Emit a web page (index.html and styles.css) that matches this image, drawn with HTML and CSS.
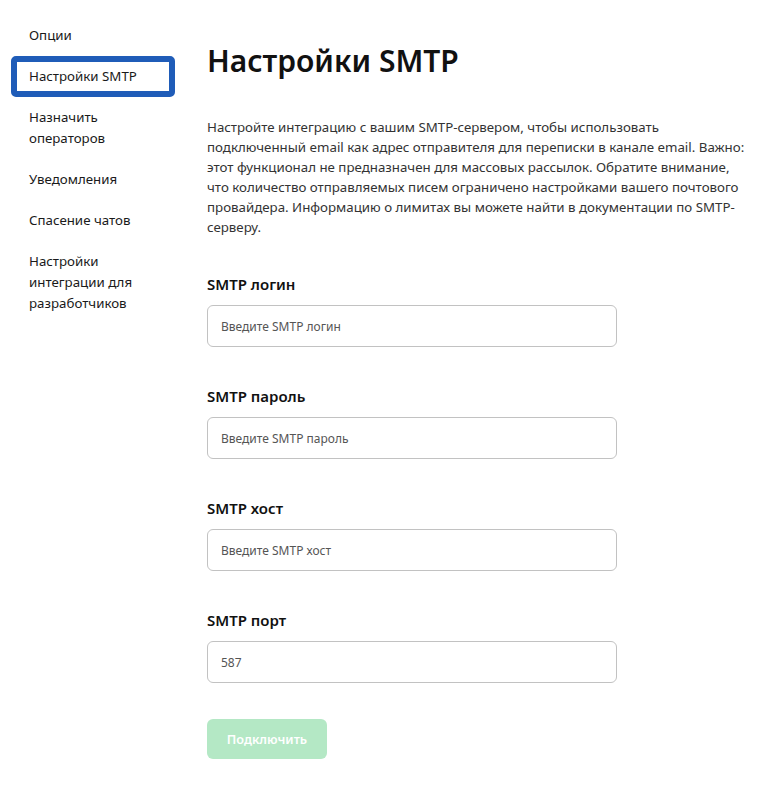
FILE: index.html
```html
<!DOCTYPE html>
<html lang="ru">
<head>
<meta charset="utf-8">
<title>Настройки SMTP</title>
<link rel="stylesheet" href="styles.css">
</head>
<body>
<div class="layout">
  <nav class="sidebar">
    <a class="nav-item">Опции</a>
    <a class="nav-item active">Настройки SMTP</a>
    <a class="nav-item">Назначить операторов</a>
    <a class="nav-item">Уведомления</a>
    <a class="nav-item">Спасение чатов</a>
    <a class="nav-item">Настройки интеграции для разработчиков</a>
  </nav>
  <main class="content">
    <h1 class="title">Настройки SMTP</h1>
    <p class="intro">Настройте интеграцию с вашим SMTP-сервером, чтобы использовать подключенный email как адрес отправителя для переписки в канале email. Важно: этот функционал не предназначен для массовых рассылок. Обратите внимание, что количество отправляемых писем ограничено настройками вашего почтового провайдера. Информацию о лимитах вы можете найти в документации по SMTP-серверу.</p>
    <form class="form">
      <div class="field">
        <label class="label">SMTP логин</label>
        <input class="input" type="text" placeholder="Введите SMTP логин">
      </div>
      <div class="field">
        <label class="label">SMTP пароль</label>
        <input class="input" type="text" placeholder="Введите SMTP пароль">
      </div>
      <div class="field">
        <label class="label">SMTP хост</label>
        <input class="input" type="text" placeholder="Введите SMTP хост">
      </div>
      <div class="field">
        <label class="label">SMTP порт</label>
        <input class="input" type="text" value="587">
      </div>
      <button class="btn" type="button" disabled>Подключить</button>
    </form>
  </main>
</div>
</body>
</html>
```
FILE: styles.css
```css
* { box-sizing: border-box; }
html, body {
  margin: 0;
  padding: 0;
  background: #ffffff;
  font-family: "Noto Sans", "Open Sans", sans-serif;
  color: #1a1a1a;
}
.layout {
  display: flex;
  align-items: flex-start;
}
.sidebar {
  flex: 0 0 207px;
  padding: 15px 0 0 11px;
  display: flex;
  flex-direction: column;
}
.nav-item {
  display: block;
  width: 164px;
  padding: 10px 18px;
  font-size: 13.3px;
  line-height: 21px;
  color: #1a1a1a;
  border-radius: 5px;
}
.nav-item.active {
  border: 6px solid #1f5cb8;
  padding: 4px 12px;
}
.content {
  width: 545px;
  padding-top: 43px;
}
.title {
  margin: 0;
  font-size: 30px;
  line-height: 36px;
  font-weight: 600;
  color: #111;
}
.intro {
  margin: 38px 0 0;
  font-size: 13.3px;
  line-height: 20px;
  color: #333;
}
.form {
  margin-top: 37px;
  display: flex;
  flex-direction: column;
}
.field {
  display: flex;
  flex-direction: column;
  gap: 11px;
  margin-bottom: 39px;
}
.label {
  font-size: 15px;
  line-height: 20px;
  font-weight: 600;
  color: #111;
}
.input {
  width: 410px;
  height: 42px;
  border: 1px solid #c2c2c2;
  border-radius: 6px;
  padding: 0 13px;
  font-family: inherit;
  font-size: 12px;
  color: #555;
  background: #fff;
}
.input::placeholder { color: #555; }
.btn {
  align-self: flex-start;
  margin-top: -3px;
  width: 120px;
  height: 40px;
  border: none;
  border-radius: 6px;
  background: #b4e8c5;
  color: #ffffff;
  font-family: inherit;
  font-size: 12.7px;
  font-weight: 600;
}
```
